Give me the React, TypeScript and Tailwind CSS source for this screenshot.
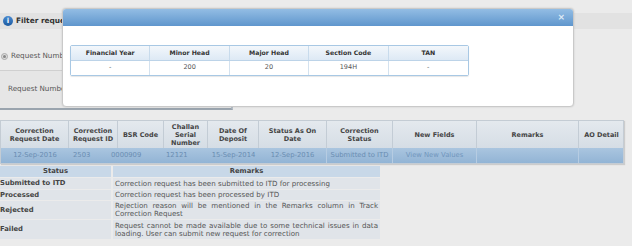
import React from "react";

const F = { fontFamily: '"DejaVu Sans", Verdana, sans-serif' } as React.CSSProperties;

const headCols: { w: string; label: React.ReactNode }[] = [
  { w: "w-[68px]", label: <>Correction<br />Request Date</> },
  { w: "w-[49px]", label: <>Correction<br />Request ID</> },
  { w: "w-[46px]", label: <>BSR Code</> },
  { w: "w-[44px]", label: <>Challan<br />Serial<br />Number</> },
  { w: "w-[51px]", label: <>Date Of<br />Deposit</> },
  { w: "w-[68px]", label: <>Status As On<br />Date</> },
  { w: "w-[66px]", label: <>Correction<br />Status</> },
  { w: "w-[84px]", label: <>New Fields</> },
  { w: "w-[102px]", label: <>Remarks</> },
  { w: "w-[45px]", label: <>AO Detail</> },
];

const statusRows: { s: string; r: string; h: string }[] = [
  { s: "Submitted to ITD", r: "Correction request has been submitted to ITD for processing", h: "h-[11px]" },
  { s: "Processed", r: "Correction request has been processed by ITD", h: "h-[10px]" },
  { s: "Rejected", r: "Rejection reason will be mentioned in the Remarks column in Track Correction Request", h: "h-[18px]" },
  { s: "Failed", r: "Request cannot be made available due to some technical issues in data loading. User can submit new request for correction", h: "h-[19px]" },
];

export default function App() {
  return (
    <div className="relative w-[632px] h-[246px] overflow-hidden bg-[#ebebeb] text-[#444]" style={F}>
      {/* filter bar */}
      <div className="pt-[13px]">
        <div className="h-[16px] bg-[#e2e2e2] flex items-center pl-[3px] gap-[3px]">
          <div className="w-[10px] h-[10px] rounded-full bg-[linear-gradient(#4a8ad0,#1c5aa0)] flex items-center justify-center text-white text-[7px] font-bold leading-none">i</div>
          <span className="text-[7.4px] font-bold text-[#333]">Filter request</span>
        </div>
      </div>
      {/* radio */}
      <div className="mt-[22px] h-[10px] flex items-center pl-[1px] gap-[3px]">
        <div className="w-[7px] h-[7px] rounded-full border border-[#aaa] bg-[#ddd] flex items-center justify-center">
          <div className="w-[3px] h-[3px] rounded-full bg-[#888]" />
        </div>
        <span className="text-[7.2px] text-[#555]">Request Number</span>
      </div>
      {/* box */}
      <div className="mt-[9px] w-[233px] h-[40px] border-t border-t-[#d0d0d0] border-b-2 border-b-[#9aa4ae] border-r-2 border-r-[#b8c0c8] bg-[#e6e6e6] flex items-center pl-[8px]">
        <span className="text-[7.2px] text-[#555]">Request Number</span>
      </div>
      {/* main table */}
      <div className="mt-[10px] w-[624px] border border-[#c4ccd4] shadow-[1px_1px_1px_#ccc]">
        <div className="flex h-[27px] bg-[linear-gradient(#e4e9ee,#d5dde5)]">
          {headCols.map((c, i) => (
            <div key={i} className={`${c.w} shrink-0 flex items-center justify-center text-center text-[6.5px] leading-[8px] font-bold text-[#444] ${i < 9 ? "border-r border-[#c3ccd5]" : ""}`}>
              <span>{c.label}</span>
            </div>
          ))}
        </div>
        <div className="flex h-[15px] bg-[linear-gradient(#aac5df,#92b4d5)] text-[6.8px] text-[#6a8db2] items-center">
          <div className="w-[68px] shrink-0 text-center">12-Sep-2016</div>
          <div className="w-[40px] shrink-0 pl-[4px]">2503</div>
          <div className="w-[57px] shrink-0 pl-[2px]">0000909</div>
          <div className="w-[42px] shrink-0 pl-0">12121</div>
          <div className="w-[51px] shrink-0 text-center">15-Sep-2014</div>
          <div className="w-[68px] shrink-0 text-center border-r border-[#b6cce2] h-full flex items-center justify-center">12-Sep-2016</div>
          <div className="w-[66px] shrink-0 text-center border-r border-[#b6cce2] h-full flex items-center justify-center">Submitted to ITD</div>
          <div className="w-[84px] shrink-0 text-center border-r border-[#b6cce2] h-full flex items-center justify-center text-[#7196bd]">View New Values</div>
          <div className="w-[102px] shrink-0 border-r border-[#b6cce2] h-full" />
          <div className="w-[45px] shrink-0 h-full" />
        </div>
      </div>
      {/* status table */}
      <div className="mt-[2px] w-[380px] grid grid-cols-[111px_267px] gap-x-[2px] gap-y-[1px]">
        <div className="h-[11px] bg-[#c8d8e8] flex items-center justify-center text-[6.8px] font-bold text-[#444]">Status</div>
        <div className="h-[11px] bg-[#c8d8e8] flex items-center justify-center text-[6.8px] font-bold text-[#444]">Remarks</div>
        {statusRows.map((row, i) => (
          <React.Fragment key={i}>
            <div className={`${row.h} bg-[#e0e4e9] flex items-center text-[6.8px] font-bold text-[#444]`}>{row.s}</div>
            <div className={`${row.h} bg-[#e0e4e9] flex items-center px-[2px] text-[7.1px] leading-[8px] text-[#555]`}>
              <span className="text-justify [text-align-last:left] w-full">{row.r}</span>
            </div>
          </React.Fragment>
        ))}
      </div>

      {/* modal */}
      <div className="absolute left-[62px] top-[8px] w-[512px] h-[99px] bg-white border border-[#c9c9c9] rounded-[4px] shadow-[0_0_2px_rgba(0,0,0,0.15)]">
        <div className="h-[17px] rounded-t-[3px] bg-[linear-gradient(#93bde4,#5f96cd)] flex items-center justify-end pr-[8px]">
          <span className="text-[9px] font-bold text-[#dfeaf5] leading-none">×</span>
        </div>
        <div className="mt-[19px] ml-[7px] w-[399px] border border-[#a8c8e4] rounded-[2px] shadow-[0_1px_1px_rgba(0,0,0,0.1)]">
          <div className="grid grid-cols-5 h-[15px] bg-[linear-gradient(#f3f7fb,#dde9f5)] border-b border-[#bcd3e8]">
            {["Financial Year", "Minor Head", "Major Head", "Section Code", "TAN"].map((t, i) => (
              <div key={i} className={`flex items-center justify-center text-[6.2px] font-bold text-[#333] ${i < 4 ? "border-r border-[#c8dbec]" : ""}`}>{t}</div>
            ))}
          </div>
          <div className="grid grid-cols-5 h-[14px] bg-white">
            {["-", "200", "20", "194H", "-"].map((t, i) => (
              <div key={i} className={`flex items-center justify-center text-[6.5px] text-[#555] ${i < 4 ? "border-r border-[#d4e2ef]" : ""}`}>{t}</div>
            ))}
          </div>
        </div>
      </div>
    </div>
  );
}
